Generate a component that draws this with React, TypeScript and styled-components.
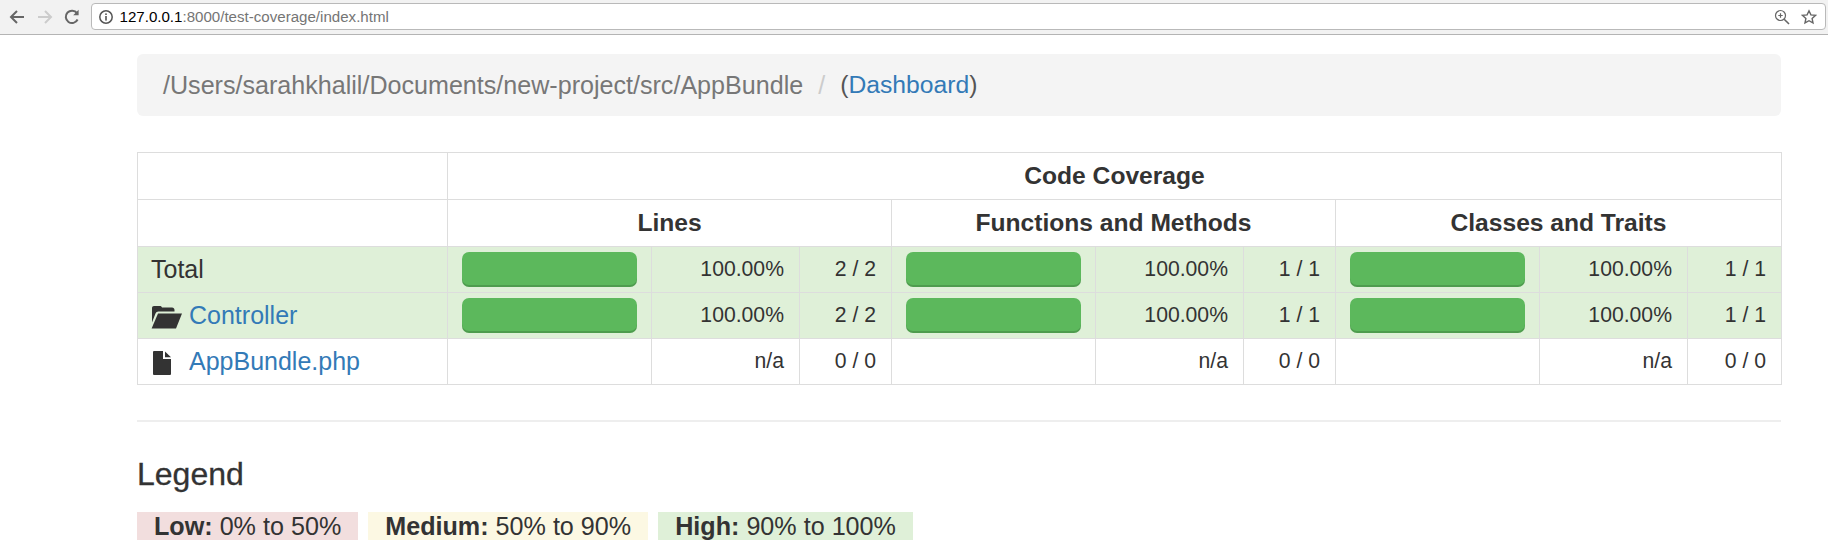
import styled, { createGlobalStyle } from "styled-components";

const GlobalStyle = createGlobalStyle`
  html, body {
    margin: 0;
    padding: 0;
    background: #fff;
  }
  body {
    font-family: "Liberation Sans", Arial, sans-serif;
    color: #333;
  }
`;

type Row = {
  name: string;
  kind: "total" | "folder" | "file";
  lines: [string, string];
  funcs: [string, string];
  classes: [string, string];
  full: boolean;
};

const rows: Row[] = [
  { name: "Total", kind: "total", lines: ["100.00%", "2 / 2"], funcs: ["100.00%", "1 / 1"], classes: ["100.00%", "1 / 1"], full: true },
  { name: "Controller", kind: "folder", lines: ["100.00%", "2 / 2"], funcs: ["100.00%", "1 / 1"], classes: ["100.00%", "1 / 1"], full: true },
  { name: "AppBundle.php", kind: "file", lines: ["n/a", "0 / 0"], funcs: ["n/a", "0 / 0"], classes: ["n/a", "0 / 0"], full: false },
];

const colWidths = [310, 204, 148, 92, 204, 148, 92, 204, 148, 94];

const Metric = ({ data, full }: { data: [string, string]; full: boolean }) => (
  <>
    <BarCell>{full && <Bar />}</BarCell>
    <NumCell>{data[0]}</NumCell>
    <NumCell>{data[1]}</NumCell>
  </>
);

const App = () => {
  return (
    <>
      <GlobalStyle />
      <Chrome>
        <NavBtn>
          <svg width="18" height="18" viewBox="0 0 18 18" fill="none" stroke="#666" strokeWidth="2">
            <path d="M16 9H3M9 3L3 9l6 6" />
          </svg>
        </NavBtn>
        <NavBtn>
          <svg width="18" height="18" viewBox="0 0 18 18" fill="none" stroke="#ccc" strokeWidth="2">
            <path d="M2 9h13M9 3l6 6-6 6" />
          </svg>
        </NavBtn>
        <NavBtn>
          <svg width="18" height="18" viewBox="0 0 18 18" fill="none" stroke="#666" strokeWidth="2">
            <path d="M14.6 11.5A6.2 6.2 0 1 1 14 5.2" />
            <path d="M15.6 1.800v5.400h-5.400z" fill="#666" stroke="none" />
          </svg>
        </NavBtn>
        <Omnibox>
          <svg width="16" height="16" viewBox="0 0 16 16" fill="none">
            <circle cx="8" cy="8" r="6.2" stroke="#555" strokeWidth="1.5" />
            <rect x="7.2" y="7" width="1.6" height="4.6" fill="#555" />
            <rect x="7.2" y="4.4" width="1.6" height="1.6" fill="#555" />
          </svg>
          <Url>
            <b>127.0.0.1</b>:8000/test-coverage/index.html
          </Url>
          <OmniIcons>
            <svg width="16" height="16" viewBox="0 0 16 16" fill="none" stroke="#666" strokeWidth="1.2">
              <circle cx="6.5" cy="6.5" r="5" />
              <path d="M10.2 10.2L15 15" strokeWidth="1.6" />
              <path d="M6.5 4.3v4.4M4.3 6.5h4.4" />
            </svg>
            <svg width="16" height="16" viewBox="0 0 16 16" fill="none" stroke="#666" strokeWidth="1.4">
              <path d="M8 1.800l1.900 4.100 4.500.5-3.300 3 .9 4.500L8 11.700l-4 2.200.9-4.500-3.300-3 4.500-.5z" />
            </svg>
          </OmniIcons>
        </Omnibox>
      </Chrome>
      <Page>
        <Breadcrumb>
          <span>/Users/sarahkhalil/Documents/new-project/src/AppBundle</span>
          <Divider>/</Divider>
          <Dash>
            (<Link>Dashboard</Link>)
          </Dash>
        </Breadcrumb>
        <Table>
          <colgroup>
            {colWidths.map((w, i) => (
              <col key={i} width={w} />
            ))}
          </colgroup>
          <thead>
            <tr>
              <HeadCell></HeadCell>
              <HeadCell colSpan={9}>Code Coverage</HeadCell>
            </tr>
            <tr>
              <HeadCell></HeadCell>
              <HeadCell colSpan={3}>Lines</HeadCell>
              <HeadCell colSpan={3}>Functions and Methods</HeadCell>
              <HeadCell colSpan={3}>Classes and Traits</HeadCell>
            </tr>
          </thead>
          <tbody>
            {rows.map((r) => (
              <BodyRow key={r.name} $ok={r.full}>
                <NameCell>
                  {r.kind === "folder" && (
                    <RowIcon>
                      <svg width="31" height="24" viewBox="0 0 31 24" fill="#333">
                        <path d="M1 3C1 1.800 1.800 1 3 1h6c1 0 1.600.5 2 1.500h10c1.500 0 2.500 1 2.500 2.500v1.500H7.500c-1.500 0-2.500.7-3 2L1 17.500z" />
                        <path d="M7 8.500h24L25 23.500H.6z" />
                      </svg>
                    </RowIcon>
                  )}
                  {r.kind === "file" && (
                    <RowIcon>
                      <svg width="31" height="26" viewBox="0 0 31 26" fill="#333">
                        <path d="M3 1h9v8h8v15a1 1 0 0 1-1 1H3a1 1 0 0 1-1-1V2a1 1 0 0 1 1-1z" />
                        <path d="M14 1.500l6 5.800h-6z" />
                      </svg>
                    </RowIcon>
                  )}
                  {r.kind === "total" ? r.name : <Link>{r.name}</Link>}
                </NameCell>
                <Metric data={r.lines} full={r.full} />
                <Metric data={r.funcs} full={r.full} />
                <Metric data={r.classes} full={r.full} />
              </BodyRow>
            ))}
          </tbody>
        </Table>
        <Rule />
        <Legend>Legend</Legend>
        <Badges>
          <Badge $bg="#f2dede">
            <b>Low:</b> 0% to 50%
          </Badge>
          <Badge $bg="#fcf8e3">
            <b>Medium:</b> 50% to 90%
          </Badge>
          <Badge $bg="#dff0d8">
            <b>High:</b> 90% to 100%
          </Badge>
        </Badges>
      </Page>
    </>
  );
};

const Chrome = styled.div`
  height: 35px;
  box-sizing: border-box;
  background: #f2f2f2;
  border-bottom: 1px solid #b4b4b4;
  display: flex;
  align-items: center;
  padding: 0 2px 1px 8px;
`;

const NavBtn = styled.div`
  width: 27.5px;
  height: 18px;
  display: flex;
  align-items: center;
`;

const Omnibox = styled.div`
  flex: 1;
  height: 27px;
  box-sizing: border-box;
  background: #fff;
  border: 1px solid #b9b9b9;
  border-radius: 4px;
  display: flex;
  align-items: center;
  padding: 0 8px 0 6px;
`;

const Url = styled.div`
  margin-left: 6px;
  font-size: 15.1px;
  color: #757575;
  & b {
    font-weight: 400;
    color: #000;
  }
`;

const OmniIcons = styled.div`
  margin-left: auto;
  display: flex;
  gap: 11px;
`;

const Page = styled.div`
  padding: 19px 47px 0 137px;
`;

const Breadcrumb = styled.div`
  height: 62px;
  box-sizing: border-box;
  background: #f4f4f4;
  border-radius: 6px;
  padding-left: 26px;
  display: flex;
  align-items: center;
  font-size: 25.1px;
  color: #777;
`;

const Divider = styled.span`
  color: #ccc;
  margin: 0 15px;
`;

const Dash = styled.span`
  color: #555;
  font-size: 24.7px;
`;

const Link = styled.a`
  color: #337ab7;
`;

const Table = styled.table`
  width: 1644px;
  margin-top: 36px;
  table-layout: fixed;
  border-collapse: collapse;
  font-size: 21.2px;
`;

const HeadCell = styled.th`
  height: 46px;
  padding: 0;
  border: 1px solid #ddd;
  font-size: 24.6px;
  font-weight: 700;
  text-align: center;
  color: #333;
`;

const BodyRow = styled.tr<{ $ok: boolean }>`
  height: 46px;
  background: ${(p) => (p.$ok ? "#dff0d8" : "#fff")};
`;

const NameCell = styled.td`
  padding: 0 0 0 13px;
  border: 1px solid #ddd;
  font-size: 25px;
  white-space: nowrap;
`;

const RowIcon = styled.span`
  display: inline-block;
  width: 38px;
  vertical-align: middle;
  & svg {
    display: block;
  }
`;

const BarCell = styled.td`
  padding: 0 14px;
  border: 1px solid #ddd;
`;

const Bar = styled.div`
  height: 35px;
  background: #5cb85c;
  border-radius: 7px;
  box-shadow: inset 0 -2px 0 rgba(0, 0, 0, 0.15);
`;

const NumCell = styled.td`
  padding: 0 15px 2px 0;
  border: 1px solid #ddd;
  text-align: right;
  white-space: nowrap;
`;

const Rule = styled.hr`
  margin: 35px 0 0;
  border: 0;
  border-top: 2px solid #eee;
`;

const Legend = styled.h2`
  margin: 34px 0 0;
  font-size: 32px;
  line-height: 36px;
  font-weight: 500;
  -webkit-text-stroke: 0.3px #333;
`;

const Badges = styled.div`
  display: flex;
  gap: 10px;
  margin-top: 20px;
`;

const Badge = styled.div<{ $bg: string }>`
  height: 28px;
  line-height: 28px;
  padding: 0 17px;
  font-size: 25.15px;
  background: ${(p) => p.$bg};
`;

export default App;
